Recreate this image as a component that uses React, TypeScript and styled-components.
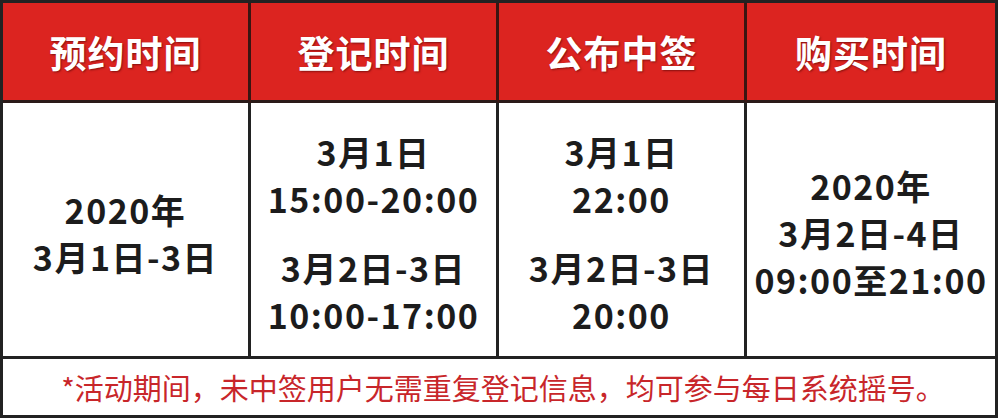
import React from "react";
import styled, { createGlobalStyle } from "styled-components";

const GlobalStyle = createGlobalStyle`
    html, body {
        margin: 0;
        padding: 0;
        background: #ffffff;
    }
    body {
        font-family: "Noto Sans CJK SC", "Noto Sans", sans-serif;
    }
`;

const Table = styled.div`
    box-sizing: border-box;
    width: 998px;
    height: 418px;
    border: 3px solid #222;
    display: grid;
    grid-template-columns: repeat(4, 1fr);
    grid-template-rows: 100px 1fr 56px;
    background: #fff;
`;

const HeadCell = styled.div<{ last?: boolean }>`
    background: #dc2420;
    border-right: ${(p) => (p.last ? "none" : "3px solid #3a1512")};
    border-bottom: 3px solid #2a1a18;
    display: flex;
    align-items: center;
    justify-content: center;
    color: #fff;
    font-size: 37px;
    font-weight: 700;
    letter-spacing: 1px;
    text-shadow: 1px 1px 2px rgba(60, 0, 0, 0.55);
`;

const BodyCell = styled.div<{ last?: boolean }>`
    border-right: ${(p) => (p.last ? "none" : "3px solid #222")};
    border-bottom: 3px solid #222;
    display: flex;
    flex-direction: column;
    align-items: center;
    justify-content: center;
    gap: 22px;
    padding-top: 6px;
    color: #1c1c1c;
    font-size: 34px;
    font-weight: 700;
    letter-spacing: 1.5px;
    line-height: 47px;
    text-align: center;
`;

const Group = styled.div`
    display: flex;
    flex-direction: column;
    align-items: center;
`;

const Footer = styled.div`
    grid-column: 1 / -1;
    display: flex;
    align-items: center;
    justify-content: center;
    color: #c8262a;
    font-size: 29px;
    padding-left: 8px;
`;

const heads = ["预约时间", "登记时间", "公布中签", "购买时间"];

const body: string[][][] = [
    [["2020年", "3月1日-3日"]],
    [
        ["3月1日", "15:00-20:00"],
        ["3月2日-3日", "10:00-17:00"],
    ],
    [
        ["3月1日", "22:00"],
        ["3月2日-3日", "20:00"],
    ],
    [["2020年", "3月2日-4日", "09:00至21:00"]],
];

const App: React.FC = () => {
    return (
        <>
            <GlobalStyle />
            <Table>
                {heads.map((h, i) => (
                    <HeadCell key={h} last={i === heads.length - 1}>
                        {h}
                    </HeadCell>
                ))}
                {body.map((groups, i) => (
                    <BodyCell key={i} last={i === body.length - 1}>
                        {groups.map((g, j) => (
                            <Group key={j}>
                                {g.map((line) => (
                                    <span key={line}>{line}</span>
                                ))}
                            </Group>
                        ))}
                    </BodyCell>
                ))}
                <Footer>*活动期间，未中签用户无需重复登记信息，均可参与每日系统摇号。</Footer>
            </Table>
        </>
    );
};

export default App;
